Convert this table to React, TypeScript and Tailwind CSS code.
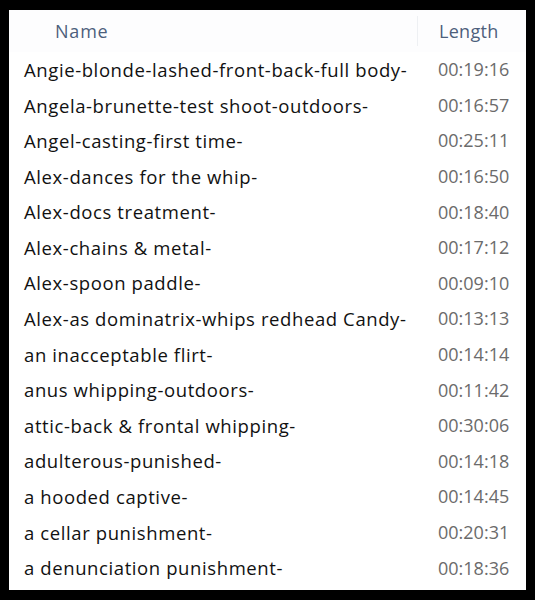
const rows: [string, string][] = [
  ["Angie-blonde-lashed-front-back-full body-", "00:19:16"],
  ["Angela-brunette-test shoot-outdoors-", "00:16:57"],
  ["Angel-casting-first time-", "00:25:11"],
  ["Alex-dances for the whip-", "00:16:50"],
  ["Alex-docs treatment-", "00:18:40"],
  ["Alex-chains & metal-", "00:17:12"],
  ["Alex-spoon paddle-", "00:09:10"],
  ["Alex-as dominatrix-whips redhead Candy-", "00:13:13"],
  ["an inacceptable flirt-", "00:14:14"],
  ["anus whipping-outdoors-", "00:11:42"],
  ["attic-back & frontal whipping-", "00:30:06"],
  ["adulterous-punished-", "00:14:18"],
  ["a hooded captive-", "00:14:45"],
  ["a cellar punishment-", "00:20:31"],
  ["a denunciation punishment-", "00:18:36"],
];

export default function App() {
  return (
    <div className="w-[535px] h-[600px] bg-black pt-[10px] pl-[9px]" style={{ fontFamily: '"Open Sans", "Noto Sans", sans-serif' }}>
      <div className="w-[517px] h-[580px] bg-white flex flex-col">
        <div className="h-[42px] flex items-center text-[18px] text-[#4d5f7c] bg-[#fdfdfe]">
          <div className="pl-[46px] w-[408px] tracking-[0.8px]">Name</div>
          <div className="w-px h-[30px] bg-[#eef0f3]" />
          <div className="pl-[21px] tracking-[0.3px]">Length</div>
        </div>
        <div className="flex flex-col">
          {rows.map(([name, len]) => (
            <div key={name} className="h-[35.6px] flex items-center text-[18.5px]">
              <div className="pl-[15px] w-[429px] text-[#111] whitespace-nowrap tracking-[0.6px]">{name}</div>
              <div className="text-[#6b6b6b] text-[18px]">{len}</div>
            </div>
          ))}
        </div>
      </div>
    </div>
  );
}
